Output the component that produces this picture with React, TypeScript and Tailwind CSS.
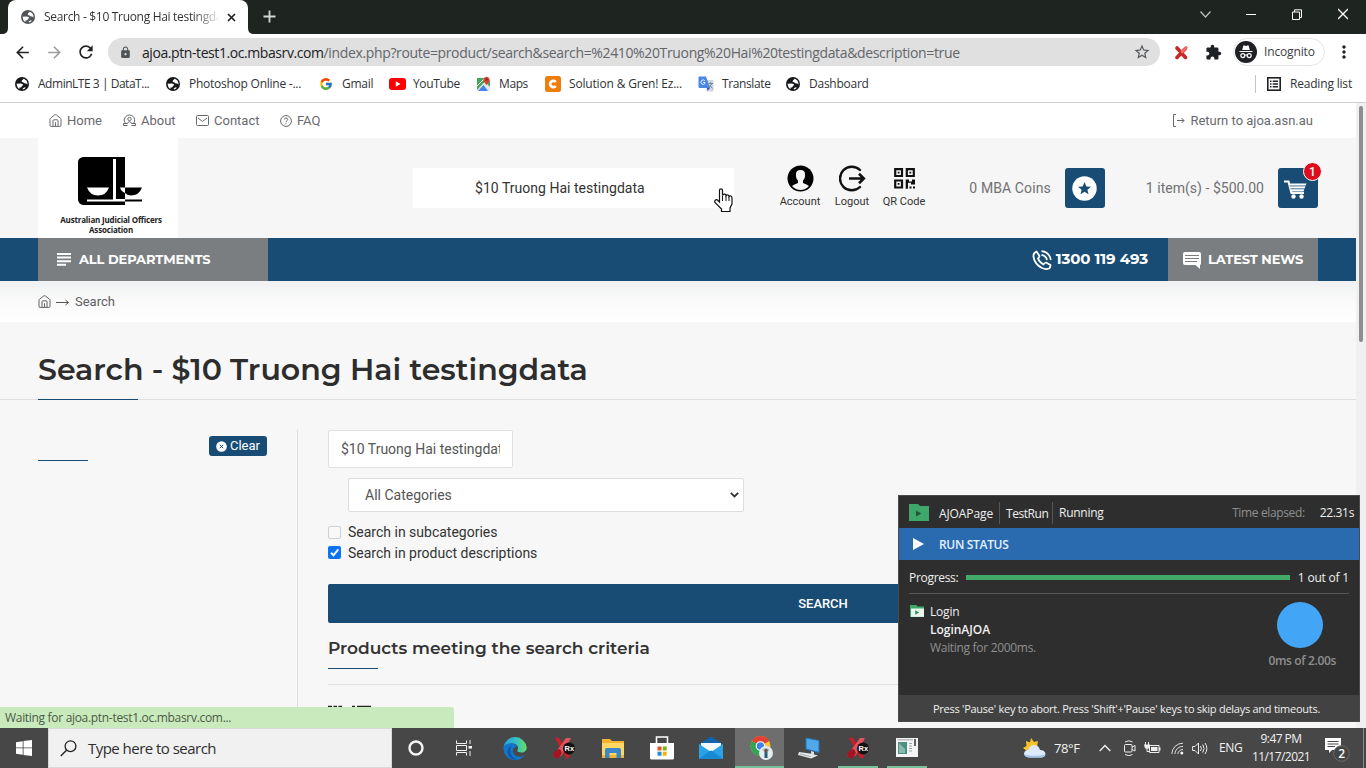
import type { ReactNode } from "react";
import { MdExtension, MdLock, MdStarBorder, MdMoreVert, MdRefresh, MdArrowBack, MdArrowForward } from "react-icons/md";
import { FcGoogle } from "react-icons/fc";

const segoe = "font-['Open_Sans','Noto_Sans',sans-serif]";
const heading = "font-['Montserrat',Inter,sans-serif]";

function Icon({ w, h = w, className = "", children }: { w: number; h?: number; className?: string; children: ReactNode }) {
  return (
    <svg width={w} height={h} viewBox={`0 0 ${w} ${h}`} fill="none" className={`shrink-0 ${className}`}>
      {children}
    </svg>
  );
}

function Globe({ className = "" }: { className?: string }) {
  return (
    <Icon w={14} className={className}>
      <circle cx="7" cy="7" r="7" fill="currentColor" />
      <path d="M1.500 6.800L5.500 6.600Q8 6.500 8.300 8.300Q6.600 8.500 6.500 10Q5.500 10.800 4.500 10.500L4.300 12.200Q1.800 10.500 1.500 6.800Z" fill="#fff" />
      <path d="M8.800 1.800L7 3.200L6.600 5L8.300 5.200L9 6.200L11.200 6.400L12.600 7.400Q12.500 3.200 8.800 1.800ZM7.800 11.300L9.800 10.300L10.800 10.700Q9.500 12.300 7.800 12.600Z" fill="#fff" />
    </Icon>
  );
}

function HomeIcon() {
  return (
    <Icon w={13}>
      <path d="M1 5.3 Q1 4.6 1.6 4.1 L5.6 1 Q6.5 .4 7.4 1 L11.4 4.1 Q12 4.6 12 5.3 V11.3 Q12 12.4 10.9 12.4 H2.1 Q1 12.4 1 11.3Z" stroke="currentColor" />
      <path d="M4 12V6.6Q4 5.8 4.8 5.8H8.2Q9 5.8 9 6.6V12M6.5 8.3V12" stroke="currentColor" />
    </Icon>
  );
}

function TabStrip() {
  return (
    <div className="flex h-[34px] bg-[#1e241f] pl-2">
      <div className="relative flex w-60 items-center rounded-t-lg bg-white pl-[13px] pr-3">
        <Globe className="text-[#505357]" />
        <span className="ml-[9px] w-[174px] overflow-hidden whitespace-nowrap bg-gradient-to-r from-[#2c2e30] from-85% to-[#e8e8e8] bg-clip-text text-[12px] tracking-[-0.31px] text-transparent">
          Search - $10 Truong Hai testingdata
        </span>
        <Icon w={9} className="ml-[9px]">
          <path d="M1 1L8 8M8 1L1 8" stroke="#202124" strokeWidth="1.7" />
        </Icon>
        <Icon w={6} className="absolute -left-[6px] bottom-0">
          <path d="M6 0V6H0Q6 6 6 0Z" fill="#fff" />
        </Icon>
        <Icon w={6} className="absolute -right-[6px] bottom-0">
          <path d="M0 0V6H6Q0 6 0 0Z" fill="#fff" />
        </Icon>
      </div>
      <Icon w={13} className="ml-[15px] mt-[10px]">
        <path d="M6.5 .5V12.5M.5 6.5H12.5" stroke="#d5d7d5" strokeWidth="1.8" />
      </Icon>
      <div className="ml-auto mr-[18px] mt-[8px] flex h-3 items-center">
        <Icon w={11} h={12} className="mr-[35px]">
          <path d="M.5 3.5L5.5 9L10.500 3.500" stroke="#bfc2bf" strokeWidth="1.2" />
        </Icon>
        <Icon w={10} h={12} className="mr-[36px]">
          <path d="M0 6.500H10" stroke="#fff" />
        </Icon>
        <Icon w={10} h={11} className="mr-[36px]">
          <path d="M.5 3H7.500V10.500H.5ZM2.500 3V.8H9.500V8.500H7.500" stroke="#fff" />
        </Icon>
        <Icon w={10} h={12}>
          <path d="M0 1L10 11M10 1L0 11" stroke="#fff" strokeWidth="1.300" />
        </Icon>
      </div>
    </div>
  );
}

function Toolbar() {
  return (
    <div className="flex h-9 items-center bg-white pl-[13px]">
      <MdArrowBack className="h-[19px] w-[19px] text-[#202124]" />
      <MdArrowForward className="ml-[13px] h-[19px] w-[19px] text-[#9b9d9f]" />
      <MdRefresh className="ml-[12px] h-[20px] w-[20px] text-[#202124]" />
      <div className="ml-3 flex h-7 w-[1052px] items-center rounded-full bg-[#e0e0e1] pl-[11px] pr-[9px]">
        <MdLock className="h-[13px] w-[13px] text-[#4f5256]" />
        <span className="ml-[10px] whitespace-nowrap text-[14px] tracking-[-0.355px] text-[#63666a]">
          <span className="tracking-[-0.42px] text-[#202124]">ajoa.ptn-test1.oc.mbasrv.com</span>
          /index.php?route=product/search&amp;search=%2410%20Truong%20Hai%20testingdata&amp;description=true
        </span>
        <MdStarBorder className="ml-auto h-[18px] w-[18px] text-[#55585c]" />
      </div>
      <Icon w={15} className="ml-[14px]">
        <path d="M3 3L11.500 12.500M11 4L3 12.500" stroke="#c62828" strokeWidth="3.600" strokeLinecap="round" />
        <path d="M8.500 6.500L12 2.800" stroke="#ef6a62" strokeWidth="3.400" strokeLinecap="round" />
        <path d="M0 5.500L5 7.500L0 9.500Z" fill="#fff" />
      </Icon>
      <MdExtension className="ml-[16px] h-[17px] w-[17px] text-[#202124]" />
      <div className="ml-[11px] flex h-7 w-[92px] items-center rounded-full border border-[#e4e4e4]">
        <Icon w={22} className="ml-px">
          <circle cx="11" cy="11" r="11" fill="#202124" />
          <path d="M7.200 9L8.300 4.800Q8.700 4 9.500 4.400L11 4.900L12.500 4.400Q13.300 4 13.700 4.800L14.800 9ZM4.500 10H17.500V11H4.500Z" fill="#fff" />
          <circle cx="7.800" cy="14.600" r="2" stroke="#fff" strokeWidth="1.200" />
          <circle cx="14.200" cy="14.600" r="2" stroke="#fff" strokeWidth="1.200" />
          <path d="M9.800 14.200Q11 13.600 12.200 14.200" stroke="#fff" />
        </Icon>
        <span className="ml-[7px] text-[12px] tracking-[-0.14px] text-[#3c4043]">Incognito</span>
      </div>
      <MdMoreVert className="ml-[9px] h-5 w-5 text-[#202124]" />
    </div>
  );
}

function Mark({ children, label, width }: { children: ReactNode; label: ReactNode; width: string }) {
  return (
    <div className={`flex shrink-0 items-center ${width}`}>
      <span className="flex w-[24px]">{children}</span>
      <span className="whitespace-nowrap">{label}</span>
    </div>
  );
}

function Bookmarks() {
  return (
    <div className="flex h-[33px] items-center border-b border-[#cfcfcf] bg-white pb-[5px] pl-[14px] text-[12px] tracking-[-0.25px] text-[#303336]">
      <Mark width="w-[151px]" label={<span className="tracking-[-0.47px]">AdminLTE 3 | DataT...</span>}><Globe className="ml-px text-[#161719]" /></Mark>
      <Mark width="w-[153px]" label="Photoshop Online -..."><Globe className="ml-px text-[#161719]" /></Mark>
      <Mark width="w-[71px]" label="Gmail"><FcGoogle className="ml-px h-[14px] w-[14px]" /></Mark>
      <Mark width="w-[86px]" label={<span className="tracking-[-0.35px]">YouTube</span>}>
        <Icon w={17} h={12}>
          <rect width="17" height="12" rx="3" fill="#f00" />
          <path d="M6.800 3.300L11.500 6L6.800 8.700Z" fill="#fff" />
        </Icon>
      </Mark>
      <Mark width="w-[70px]" label={<span className="tracking-[-0.4px]">Maps</span>}>
        <Icon w={16}>
          <path d="M2 2H12L15 5V14H2Z" fill="#43a85a" />
          <path d="M2 14L10 5.500L15 11V15H3Z" fill="#e4e8ea" />
          <path d="M3 15L8.500 9L13 15Z" fill="#4484ef" />
          <path d="M2 10L9 3" stroke="#fff" />
          <path d="M11.500 9Q8 5 8.400 3.500A3.200 3.200 0 0 1 14.700 3.500Q15 5 11.500 9Z" fill="#df3e33" />
          <circle cx="11.600" cy="3.500" r="1.200" fill="#922" />
        </Icon>
      </Mark>
      <Mark width="w-[153px]" label={<span className="tracking-[-0.17px]">Solution &amp; Gren! Ez...</span>}>
        <Icon w={16}>
          <rect width="16" height="16" rx="2.500" fill="#ed7d0c" />
          <path d="M10.800 6A3.200 3.200 0 1 0 10.800 10" stroke="#fff" strokeWidth="2.700" />
        </Icon>
      </Mark>
      <Mark width="w-[87px]" label={<span className="tracking-[-0.38px]">Translate</span>}>
        <Icon w={16}>
          <path d="M6 4H14.500Q15.500 4 15.500 5V14.500Q15.500 15.500 14.500 15.500H9Z" fill="#d2d7dc" />
          <path d="M1 .5H8L12 12H2Q.5 12 .5 10.500V1Z" fill="#4a86e8" />
          <path d="M9 12H12L9.500 15Z" fill="#2a56c6" />
          <path d="M6.800 4.700A2.200 2.200 0 1 0 7 7.300V6.500H5.200" stroke="#fff" strokeWidth=".9" />
          <path d="M10.500 7.500H15M12.500 6.300V7.500M13.800 7.500L11 12M12 9.500L14.500 12.500" stroke="#6d7b89" strokeWidth=".9" />
        </Icon>
      </Mark>
      <Mark width="w-[95px]" label="Dashboard"><Globe className="ml-px text-[#161719]" /></Mark>
      <div className="ml-auto flex items-center border-l border-[#c5c5c5] pl-[11px] pr-[14px]">
        <Icon w={14}>
          <rect x=".8" y=".8" width="12.400" height="12.400" stroke="#202124" strokeWidth="1.600" />
          <path d="M3 4.300H4.500M3 7H4.500M3 9.700H4.500M5.700 4.300H11M5.700 7H11M5.700 9.700H11" stroke="#202124" strokeWidth="1.400" />
        </Icon>
        <span className="ml-[9px] whitespace-nowrap tracking-[-0.18px]">Reading list</span>
      </div>
    </div>
  );
}

function TopLinks() {
  return (
    <div className="flex h-[35px] items-center bg-white pl-[49px] pr-[43px] text-[13px] text-[#69696d]">
      <div className="flex w-[74px] items-center gap-[5px]"><HomeIcon />Home</div>
      <div className="flex w-[73px] items-center gap-[5px]">
        <Icon w={13}>
          <path d="M2.500 9.500A5.200 5.200 0 1 1 10.500 9.500M.5 9.500H4.500Q5 7.800 6.500 7.800T8.500 9.500H12.500V11.500H8.500M.5 9.500V11.500H4.500" stroke="currentColor" />
          <circle cx="6.500" cy="5" r="1.700" stroke="currentColor" />
        </Icon>
        About
      </div>
      <div className="flex w-[84px] items-center gap-[5px]">
        <Icon w={13} h={11}>
          <rect x=".5" y=".5" width="12" height="10" rx="1" stroke="currentColor" />
          <path d="M2 3L6.500 6.500L11 3" stroke="currentColor" />
        </Icon>
        Contact
      </div>
      <div className="flex items-center gap-[5px]">
        <Icon w={12}>
          <circle cx="6" cy="6" r="5.400" stroke="currentColor" />
          <path d="M4.300 4.500Q4.400 3 6 3T7.700 4.500Q7.700 5.300 6.800 5.800T6 7.200M6 8.200V9.200" stroke="currentColor" />
        </Icon>
        FAQ
      </div>
      <div className="ml-auto flex items-center gap-[5px]">
        <Icon w={13} h={13}>
          <path d="M4 .5H1.500V12.500H4M5 6.500H12M9.500 4L12 6.500L9.500 9" stroke="currentColor" />
        </Icon>
        Return to ajoa.asn.au
      </div>
    </div>
  );
}

function Shortcut({ label, children }: { label: string; children: ReactNode }) {
  return (
    <div className="flex w-[52px] shrink-0 flex-col items-center">
      {children}
      <span className="mt-[3px] whitespace-nowrap text-[11px] leading-[14px] text-[#333]">{label}</span>
    </div>
  );
}

function Header() {
  return (
    <div className="flex h-[100px] bg-[#f6f6f6] px-[38px]">
      <div className="flex w-[140px] flex-col items-center bg-white">
        <Icon w={64} h={48} className="ml-[4px] mt-[19px]">
          <path d="M5 0H47V48H5Q0 47 0 42V5Q0 1 5 0Z" fill="#000" />
          <path d="M47 30.500H64Q61 38.500 53 38.500Q49 38 47 36Z" fill="#000" />
          <path d="M9 30.500H31Q28 38.500 20 38.500T9 30.500ZM42 30.500H47V36Q43 34 42 30.500ZM35 2H38V42H47V44.500H9V42.500H35Z" fill="#fff" />
          <path d="M47 43.500H64" stroke="#000" strokeWidth="2" />
        </Icon>
        <span className="ml-[6px] mt-[10px] text-center font-['Open_Sans',sans-serif] text-[8px] font-bold leading-[10px] tracking-[-0.18px] text-[#222]">
          Australian Judicial Officers<br />Association
        </span>
      </div>
      <div className="ml-[235px] mt-[30px] flex h-10 w-[321px] items-center bg-white pl-[62px] text-[14px] tracking-[0.02px] text-[#333]">
        $10 Truong Hai testingdata
      </div>
      <div className="ml-[40px] mt-[27px] flex">
        <Shortcut label="Account">
          <Icon w={27}>
            <circle cx="13.500" cy="13.500" r="13" fill="#000" />
            <path d="M9 9Q9 5 13.500 5T18 9Q18.500 13 16 15.500V18Q20 19.500 22 21Q18.500 25 13.500 25T5 21Q7 19.500 11 18V15.500Q8.500 13 9 9Z" fill="#f7f7f7" />
          </Icon>
        </Shortcut>
        <Shortcut label="Logout">
          <Icon w={27}>
            <path d="M21 5A11.800 11.800 0 1 0 21 22" stroke="#111" strokeWidth="2.400" strokeLinecap="round" />
            <path d="M10 13.500H24.500M20 8.800L24.800 13.500L20 18.200" stroke="#111" strokeWidth="2.600" />
          </Icon>
        </Shortcut>
        <Shortcut label="QR Code">
          <Icon w={21} h={21} className="mb-[3px] mt-[3px]">
            <path d="M1.200 1.200H8V8H1.200ZM12.800 1.200H19.800V8H12.800ZM1.200 12.500H8V19.500H1.200Z" stroke="#111" strokeWidth="2.200" />
            <path d="M3.700 3.700H5.500V5.500H3.700ZM15.400 3.700H17.200V5.500H15.400ZM3.700 15H5.500V16.800H3.700ZM11.700 11.500H15V13.500H18V11.500H21V16.500H17V14.800H14V20.800H11.700ZM15.500 18.500H17.500V20.500H15.500ZM19 18.500H21V20.500H19Z" fill="#111" />
          </Icon>
        </Shortcut>
      </div>
      <div className="ml-auto mt-[30px] flex h-10 items-center text-[14px] text-[#707174]">
        <span className="whitespace-nowrap tracking-[0.1px]">0 MBA Coins</span>
        <div className="ml-[14px] flex h-10 w-10 items-center justify-center rounded-[3px] bg-[#184c75]">
          <Icon w={25}>
            <circle cx="12.500" cy="12.500" r="12.200" fill="#fff" />
            <path d="M12.500 6L14.300 10.400L19 10.700L15.400 13.700L16.500 18.300L12.500 15.800L8.500 18.300L9.600 13.700L6 10.700L10.700 10.400Z" fill="#184c75" />
          </Icon>
        </div>
        <span className="ml-[41px] whitespace-nowrap tracking-[0.03px]">1 item(s) - $500.00</span>
        <div className="relative ml-[14px] flex h-10 w-10 items-center justify-center rounded-[3px] bg-[#184c75]">
          <Icon w={24} h={19} className="-ml-1 mt-[2px]">
            <path d="M0 1.500H4.500L7.500 13H20" stroke="#fff" strokeWidth="2.200" />
            <path d="M5 3.500H22.500L19.500 11.500H7.500Z" fill="#fff" />
            <path d="M5.500 5.900H22M6.500 8.800H21" stroke="#184c75" strokeWidth=".8" />
            <circle cx="9.500" cy="16.500" r="2.200" fill="#fff" />
            <circle cx="17.500" cy="16.500" r="2.200" fill="#fff" />
          </Icon>
          <span className="absolute -right-1 -top-[6px] flex h-[19px] w-[19px] items-center justify-center rounded-full border border-white bg-[#dd0e1c] text-[12px] font-medium leading-none text-white">
            1
          </span>
        </div>
      </div>
    </div>
  );
}

function Nav() {
  return (
    <div className={`relative flex h-[43px] items-stretch bg-[#184c75] px-[38px] font-bold text-white ${heading}`}>
      <div className="flex w-[230px] items-center bg-[#7a7e80] pl-[19px] text-[13px] tracking-[-0.1px]">
        <Icon w={14} h={13} className="mr-2">
          <path d="M0 1H14M0 4.600H14M0 8.200H14M0 11.800H9" stroke="#fff" strokeWidth="2" />
        </Icon>
        ALL DEPARTMENTS
      </div>
      <div className="ml-auto flex items-center pr-[20px] text-[15px] tracking-[-0.1px]">
        <Icon w={20} className="mr-[4px]">
          <path d="M4.500 1.500Q1 3 1.500 7Q3 14.500 10 18Q13.500 19.800 17 18.500Q18.500 17.500 18.500 15L14 12.500Q12.500 13 11.500 14.500Q7.500 12.500 6 8.500Q7.500 7 7.500 6Z" stroke="#fff" strokeWidth="1.800" strokeLinejoin="round" />
          <path d="M9.500 1.200Q17.500 2 18.800 10M9.500 4.800Q14 5.500 15 10" stroke="#fff" strokeWidth="1.700" />
        </Icon>
        1300 119 493
      </div>
      <div className="flex w-[150px] items-center bg-[#7a7e80] pl-[15px] text-[13px] tracking-[-0.1px]">
        <Icon w={18} h={17} className="mr-[7px] mt-[2px]">
          <path d="M2 0H16Q18 0 18 2V11Q18 13 17 13V17L12.500 13H2Q0 13 0 11V2Q0 0 2 0Z" fill="#fff" />
          <path d="M2 3.500H16M2 6.500H16M2 9.500H14" stroke="#7a7e80" strokeWidth="1.200" />
        </Icon>
        LATEST NEWS
      </div>
    </div>
  );
}

function Content() {
  return (
    <>
      <div className="flex h-[41px] shrink-0 items-center bg-gradient-to-b from-[#f0f1f2] via-[#fafafa] to-white pl-[38px] text-[13px] text-[#5f6063]">
        <HomeIcon />
        <Icon w={13} h={9} className="ml-[5px] mr-[6px] mt-px">
          <path d="M0 4.500H12.500M9.500 2L12.500 4.500L9.500 7" stroke="#555" />
        </Icon>
        Search
      </div>
      <div className="flex h-[78px] shrink-0 items-end border-b border-[#dfdfdf] pl-[38px]">
        <h1 className={`relative h-[47px] whitespace-nowrap text-[30px] font-semibold leading-[36px] tracking-[0.01px] text-[#2d2d2d] after:absolute after:-bottom-px after:left-0 after:h-px after:w-[100px] after:bg-[#184c75] ${heading}`}>
          Search - $10 Truong Hai testingdata
        </h1>
      </div>
      <div className="mt-[30px] flex flex-1">
        <aside className="flex w-[298px] flex-col border-r border-[#dedede] pl-[38px] pr-[30px]">
          <div className="mt-[6px] flex h-5 w-[58px] items-center self-end rounded-[3px] bg-[#184c75] pl-[7px] text-[13px] text-white">
            <Icon w={11} className="mr-[3px]">
              <circle cx="5.500" cy="5.500" r="5.300" fill="#fff" />
              <path d="M3.800 3.800L7.200 7.200M7.200 3.800L3.800 7.200" stroke="#184c75" />
            </Icon>
            Clear
          </div>
          <div className="mt-[4px] h-px w-[50px] bg-[#184c75]" />
        </aside>
        <main className="flex w-[1020px] flex-col pl-[30px] text-[14px]">
          <div className="h-[38px] w-[185px] shrink-0 rounded-[2px] border border-[#e0e0e0] bg-white px-3 leading-[36px] text-[#555]">
            <div className="overflow-hidden whitespace-nowrap">$10 Truong Hai testingdata</div>
          </div>
          <div className="ml-5 mt-[10px] flex h-[34px] w-[396px] shrink-0 items-center justify-between rounded-[2px] border border-[#dedede] bg-white pl-4 pr-1 text-[#555]">
            All Categories
            <Icon w={9} h={6}>
              <path d="M.8 .8L4.500 4.500L8.200 .8" stroke="#333" strokeWidth="1.800" />
            </Icon>
          </div>
          <label className="mt-[10px] flex h-[21px] shrink-0 items-center text-[#333]">
            <span className="mr-[7px] h-[13px] w-[13px] rounded-[2px] border border-[#d0d0d0] bg-[#f8f8f8]" />
            Search in subcategories
          </label>
          <label className="flex h-[21px] shrink-0 items-center text-[#333]">
            <Icon w={13} className="mb-[2px] mr-[7px]">
              <rect width="13" height="13" rx="2" fill="#0b74f5" />
              <path d="M3 6.800L5.500 9.300L10.300 3.300" stroke="#fff" strokeWidth="2" />
            </Icon>
            Search in product descriptions
          </label>
          <div className="mt-[20px] flex h-[39px] shrink-0 items-center justify-center rounded-[2px] bg-[#184c75] text-[13px] font-medium tracking-[-0.05px] text-white">
            SEARCH
          </div>
          <h2 className={`mt-[12px] h-[33px] shrink-0 whitespace-nowrap text-[17px] font-semibold leading-[26px] tracking-[0.01px] text-[#333] ${heading}`}>
            Products meeting the search criteria
          </h2>
          <div className="h-px w-[50px] shrink-0 bg-[#184c75]" />
          <div className="mt-[15px] h-px shrink-0 bg-[#e2e2e2]" />
          <Icon w={44} h={3} className="mt-[20px]">
            <path d="M0 1.500H4M5.500 1.500H9M10.500 1.500H14M24 1.500H27M29 1.500H43" stroke="#222" strokeWidth="1.500" />
          </Icon>
        </main>
      </div>
    </>
  );
}

function FolderIcon({ size, pale = false }: { size: number; pale?: boolean }) {
  return (
    <svg width={size} height={size * 0.85} viewBox="0 0 20 17" className="shrink-0">
      <path d="M0 0H9L11 2H20V17H0Z" fill="#3fa76a" />
      {pale && <path d="M1.500 5H20V17H1.500Z" fill="#e8f7ee" />}
      <path d={pale ? "M7.500 7.500L13 10.700L7.500 14Z" : "M7 6.500L12.500 9.500L7 12.500Z"} fill={pale ? "#2f8c55" : "#1f5a38"} />
    </svg>
  );
}

function RunnerPanel() {
  return (
    <div className={`absolute left-[898px] top-[495px] flex h-[227px] w-[462px] flex-col border border-[#4b4b4b] bg-[#2e2e2e] text-[12px] tracking-[-0.2px] text-[#f0f0f0] ${segoe}`}>
      <div className="flex h-8 shrink-0 items-center pl-[10px] pr-[5px] pt-px">
        <FolderIcon size={20} />
        <div className="ml-[10px] flex h-[22px] items-center">
          <span className="h-full w-[61px] border-r border-[#555] leading-[23px] tracking-[-0.1px]">AJOAPage</span>
          <span className="h-full w-[53px] border-r border-[#555] pl-[6px] leading-[23px] tracking-[-0.45px]">TestRun</span>
          <span className="pl-[6px] leading-[23px] tracking-[-0.26px]">Running</span>
        </div>
        <span className="ml-auto mr-[15px] pt-px tracking-[-0.36px] text-[#8e8e8e]">Time elapsed:</span>
        <span className="pt-px tracking-[-0.35px]">22.31s</span>
      </div>
      <div className="flex h-8 shrink-0 items-center bg-[#2a6aaf] pl-[14px]">
        <Icon w={12} h={12}>
          <path d="M0 0L11 6L0 12Z" fill="#fff" />
        </Icon>
        <span className="ml-[14px] mt-[2px] font-semibold tracking-[-0.32px] text-[#e4f1ff]">RUN STATUS</span>
      </div>
      <div className="mx-[10px] flex h-[34px] shrink-0 items-center border-b border-[#555] pt-[2px]">
        <span className="w-[57px] tracking-[-0.3px]">Progress:</span>
        <div className="h-[5px] w-[324px] bg-[#43a968]" />
        <span className="ml-2 whitespace-nowrap">1 out of 1</span>
      </div>
      <div className="flex flex-1 justify-between pl-[11px] pr-[23px] pt-2">
        <div className="flex gap-[6px]">
          <div className="pt-[3px]"><FolderIcon size={14} pale /></div>
          <div className="pt-px leading-[18px]">
            <div>Login</div>
            <div className="font-semibold tracking-[-0.02px]">LoginAJOA</div>
            <div className="tracking-[-0.31px] text-[#8f8f8f]">Waiting for 2000ms.</div>
          </div>
        </div>
        <div className="flex flex-col items-center">
          <div className="mr-[5px] h-[46px] w-[46px] rounded-full bg-[#42a5f5]" />
          <span className="mt-[4px] font-semibold tracking-[-0.35px] text-[#8f8f8f]">0ms of 2.00s</span>
        </div>
      </div>
      <div className="flex h-[26px] shrink-0 items-center justify-center whitespace-nowrap bg-[#424242] pr-[5px] pt-[2px] text-[11px] tracking-[-0.26px]">
        Press 'Pause' key to abort. Press 'Shift'+'Pause' keys to skip delays and timeouts.
      </div>
    </div>
  );
}

function RxIcon() {
  return (
    <Icon w={24}>
      <path d="M3 2Q6 0 8 3L18 20Q18 23 14 22Z" fill="#c3202b" />
      <path d="M14 2H19L10 19Q6 24 1 20Z" fill="#e6525a" />
      <path d="M1 19Q2 14 8 13L10 17L7 22Q3 23 1 19Z" fill="#a51420" />
      <circle cx="17" cy="12.500" r="6" fill="#111" />
      <text x="12.600" y="15.200" fontSize="7.500" fontWeight="700" fill="#fff" fontFamily="Liberation Sans, sans-serif">Rx</text>
    </Icon>
  );
}

function AppSlot({ children, active = false, open = false }: { children: ReactNode; active?: boolean; open?: boolean }) {
  return (
    <div className={`relative flex h-10 w-[49px] shrink-0 items-center justify-center ${active ? "bg-[#6e6e6e]" : ""}`}>
      {children}
      {open && <div className={`absolute bottom-0 h-[2px] bg-[#76c19a] ${active ? "w-full" : "w-10"}`} />}
    </div>
  );
}

function Taskbar() {
  return (
    <div className={`flex h-10 items-stretch bg-[#474747] ${segoe}`}>
      <div className="flex w-12 items-center justify-center">
        <Icon w={16}>
          <path d="M0 2.200L6.700 1.200V7.500H0ZM7.500 1.100L16 0V7.500H7.500ZM0 8.300H6.700V14.800L0 13.800ZM7.500 8.300H16V16L7.500 14.900Z" fill="#fff" />
        </Icon>
      </div>
      <div className="flex w-[344px] items-center border border-[#d8d8d8] bg-[#f1f1f1] pl-[11px] text-[15px] tracking-[-0.53px] text-[#2e2e2e]">
        <Icon w={17}>
          <circle cx="10.500" cy="6.200" r="5.400" stroke="#222" strokeWidth="1.300" />
          <path d="M6.500 10.300L.8 16" stroke="#222" strokeWidth="1.400" />
        </Icon>
        <span className="ml-[11px]">Type here to search</span>
      </div>
      <div className="-ml-px flex">
        <AppSlot>
          <Icon w={16}><circle cx="8" cy="8" r="6.500" stroke="#f5f5f5" strokeWidth="2.400" /></Icon>
        </AppSlot>
        <AppSlot>
          <Icon w={16} className="mr-px">
            <path d="M.5 .5V3.500H10.500V.5M.5 15.500V12.500H10.500V15.500M.5 5.500H10.500V10.500H.5ZM14 0V4M14 6V8.500M14 11V16" stroke="#f1f1f1" />
            <path d="M12.500 6H16V8.500H12.500Z" fill="#f1f1f1" />
          </Icon>
        </AppSlot>
      </div>
      <div className="ml-px flex">
        <AppSlot>
          <svg width="24" height="24" viewBox="0 0 24 24">
            <defs>
              <linearGradient id="edgeTop" x1="0" x2="1"><stop stopColor="#229fdf" /><stop offset=".55" stopColor="#35c0c5" /><stop offset="1" stopColor="#66df60" /></linearGradient>
            </defs>
            <path d="M.5 11A11.700 11.700 0 0 1 23.700 11.500C23.700 15 21.500 16.500 18.500 16.500C15 16.500 13.800 15.500 14.500 14.200C16.500 10.500 13 7.200 8.500 7.500Q3 7.800 .5 11Z" fill="url(#edgeTop)" />
            <path d="M.5 11Q3 7.400 8 7.600Q13 8 13.500 11Q9.800 11 10 15.500Q11 21 17.500 20.800Q20 20.500 22 18.800Q18.500 24 12 24Q2 23.800 .5 13Z" fill="#1177cc" />
            <path d="M8.800 9.500Q5.500 15 9.500 20.500Q12 23 15 23.700Q7 24.300 4.500 17.500Q3.500 12 8.800 9.500Z" fill="#1558a8" />
          </svg>
        </AppSlot>
        <AppSlot><RxIcon /></AppSlot>
        <AppSlot>
          <Icon w={22} h={20}>
            <path d="M0 1H8L10 3H22V20H0Z" fill="#f3b52f" />
            <path d="M0 5H22V17H0Z" fill="#ffd765" />
            <path d="M3 11.500Q3 10 4.500 10H17.500Q19 10 19 11.500V20H14.500V15H7.500V20H3Z" fill="#3c86c9" />
          </Icon>
        </AppSlot>
        <AppSlot>
          <Icon w={24} h={24}>
            <path d="M0 7H24V22Q24 23.500 22.500 23.500H1.500Q0 23.500 0 22Z" fill="#fff" />
            <path d="M6.500 7V1H17.500V7" stroke="#fff" strokeWidth="1.600" />
            <path d="M7.500 10.500H11.500V14.500H7.500Z" fill="#e6502c" />
            <path d="M12.700 10.500H16.700V14.500H12.700Z" fill="#7cb518" />
            <path d="M7.500 15.700H11.500V19.700H7.500Z" fill="#1d8fe0" />
            <path d="M12.700 15.700H16.700V19.700H12.700Z" fill="#f6b400" />
          </Icon>
        </AppSlot>
        <AppSlot>
          <Icon w={24} h={24}>
            <path d="M0 8L12 .5L24 8V14H0Z" fill="#1463ac" />
            <path d="M2 7H22V17H2Z" fill="#f5f8fb" />
            <path d="M0 8L12 16L24 8V23H0Z" fill="#28a3e8" />
            <path d="M0 23L12 14L24 23Z" fill="#1689d2" />
            <path d="M2 7.500H22L12 15Z" fill="#f5f8fb" />
          </Icon>
        </AppSlot>
        <AppSlot active open>
          <Icon w={24} h={26} className="ml-1">
            <circle cx="10.500" cy="11" r="10" fill="#fbc52d" />
            <path d="M10.500 11L1.800 6A10 10 0 0 1 19.200 6Z" fill="#e34133" />
            <path d="M10.500 11L1.800 6A10 10 0 0 0 10 21L14 13Z" fill="#2fa452" />
            <circle cx="10.500" cy="11" r="4.800" fill="#fff" />
            <circle cx="10.500" cy="11" r="3.700" fill="#3f7fe8" />
            <circle cx="16" cy="18" r="7" fill="#e5edf0" />
            <path d="M12 14.500Q16 11 20 14.500L18 17H14Z" fill="#b8cbd3" />
            <path d="M14.500 17H17.500V23H14.500Z" fill="#246078" />
            <circle cx="16" cy="15.500" r="1.800" fill="#6f4e46" />
          </Icon>
        </AppSlot>
        <AppSlot>
          <Icon w={22}>
            <path d="M8 1L21 3.500V15.500L8 12Z" fill="#4fa8ea" stroke="#2474b8" />
            <path d="M13 14L16 15V18H13Z" fill="#d7dde0" />
            <path d="M1 15L12 16.500L20 18.500L13 21.500L0 18Z" fill="#e4e8e9" />
            <path d="M2 17L13 19.700" stroke="#a8afb3" />
          </Icon>
        </AppSlot>
        <AppSlot open><RxIcon /></AppSlot>
        <AppSlot open>
          <Icon w={22} h={20}>
            <rect width="22" height="19" fill="#f4f4f4" />
            <path d="M2 4H11V16H2Z" fill="#4e8d80" />
            <path d="M3 5L9 11V15H3Z" fill="#86bbae" />
            <path d="M1.500 1.800H17M13 5.500H16M13 8H16M13 10.500H16M13 13H16" stroke="#9aa5a5" />
            <path d="M19 1V8" stroke="#333" strokeWidth="1.500" />
          </Icon>
        </AppSlot>
      </div>
      <div className="ml-auto flex items-center text-[12px] text-[#f2f2f2]">
        <Icon w={23} h={20}>
          <path d="M3 3L7 4.500L8 0L11 4L15 3L14 9L5 14L0 10L3.500 8Z" fill="#f8c629" />
          <path d="M6 19.500Q1 19 1 15.500Q1.500 12 5.500 12Q6.500 7 11.500 7Q16 7.500 17 12Q22 12 22.500 16Q22 19.500 18 19.500Z" fill="#dbeafa" />
          <path d="M6 19.500Q2 19 1.500 16.500Q11 19 22 16.500Q21 19.500 18 19.500Z" fill="#9fc5ec" />
        </Icon>
        <span className="ml-[8px] mt-[2px] w-[27px] whitespace-nowrap text-[13px] tracking-[-0.4px]">78°F</span>
        <Icon w={12} h={8} className="ml-[18px]"><path d="M.7 7L6 1.500L11.300 7" stroke="#eee" strokeWidth="1.400" /></Icon>
        <Icon w={13} h={16} className="ml-[12px]">
          <rect x="1.500" y="4.500" width="7.500" height="7.500" rx="1" stroke="#eee" />
          <path d="M9 7L12 5.500V11L9 9.500M2 2Q6 -.5 9.500 2M2 14.500Q6 17 9.500 14.500" stroke="#eee" />
        </Icon>
        <Icon w={17} h={12} className="ml-[8px]">
          <path d="M5.500 3.500H15V10.500H5.500Z" stroke="#eee" />
          <path d="M7 5H13.500V9H7ZM15 5.500H16.500V8.500H15ZM0 2.500H6V5Q5 7 3 7Q1 7 .5 5Z" fill="#eee" />
          <path d="M1.500 0V3M4.500 0V3M3 7V9.500H5" stroke="#eee" />
        </Icon>
        <Icon w={13} h={13} className="ml-[10px]">
          <path d="M.8 12A11 11 0 0 1 12 1.200M3.800 12A8 8 0 0 1 12 4.400M6.800 12A5 5 0 0 1 12 7.500" stroke="#ddd" />
          <circle cx="10.800" cy="11" r="1.500" fill="#fff" />
        </Icon>
        <Icon w={16} h={13} className="ml-[8px]">
          <path d="M.6 4.500H3L6.500 1V12L3 8.500H.6ZM8.500 4Q10.200 6.500 8.500 9M10.700 2.500Q13.500 6.500 10.700 10.500M13 1Q16.800 6.500 13 12" stroke="#eee" />
        </Icon>
        <span className="ml-[11px] w-[24px] tracking-[-0.35px]">ENG</span>
        <div className="ml-[6px] flex w-[64px] flex-col items-center whitespace-nowrap text-[12px] leading-[18px] tracking-[-0.55px]">
          <span>9:47 PM</span>
          <span>11/17/2021</span>
        </div>
        <Icon w={25} h={26} className="ml-[12px] mr-[13px] mt-1">
          <path d="M0 1H16V13H7L4 16V13H0Z" fill="#fff" />
          <path d="M2.500 4.500H13.500M2.500 7H13.500M2.500 9.500H10" stroke="#474747" />
          <circle cx="16.500" cy="16.500" r="7.800" fill="#444" stroke="#6c6c6c" />
          <text x="13.200" y="21" fontSize="12" fontWeight="600" fill="#fff" fontFamily="Open Sans, sans-serif">2</text>
        </Icon>
        <div className="h-10 w-px bg-[#8a8a8a]" />
        <div className="w-[2px]" />
      </div>
    </div>
  );
}

export default function App() {
  return (
    <div className={`relative flex h-[768px] w-[1366px] flex-col overflow-hidden bg-white ${segoe}`}>
      <TabStrip />
      <Toolbar />
      <Bookmarks />
      <div className="flex h-[625px] shrink-0 overflow-hidden">
        <div className="flex w-[1356px] flex-col overflow-hidden bg-[#f7f7f7] font-[Roboto,sans-serif]">
          <TopLinks />
          <Header />
          <Nav />
          <Content />
        </div>
        <div className="w-[10px] bg-[#f0f0f0] pl-[3px] pt-[3px]">
          <div className="h-[236px] w-1 rounded-full bg-[#8e8e8e]" />
        </div>
      </div>
      <Taskbar />
      <div className="absolute left-0 top-[707px] h-[21px] w-[454px] rounded-tr-[3px] bg-[#c9eabc] pl-[5px] text-[12px] leading-[22px] tracking-[-0.31px] text-[#4b5a46]">
        Waiting for ajoa.ptn-test1.oc.mbasrv.com...
      </div>
      <RunnerPanel />
      <Icon w={19} h={25} className="absolute left-[714px] top-[188px]">
        <path d="M5.500 14V2Q5.500 .8 7 .8T8.500 2V7.500Q9 6 10.500 6.200T12 7.500Q13 6.500 14 7T15 8.500Q16 7.500 17 8T18 10V16L16 20V23.500H7.500V21L1 14.500Q.3 13 1.500 12T4 12.500Z" fill="#fff" stroke="#111" strokeWidth="1.200" />
        <path d="M8.500 8V13M12 8V13M15 9V13" stroke="#111" />
      </Icon>
    </div>
  );
}
